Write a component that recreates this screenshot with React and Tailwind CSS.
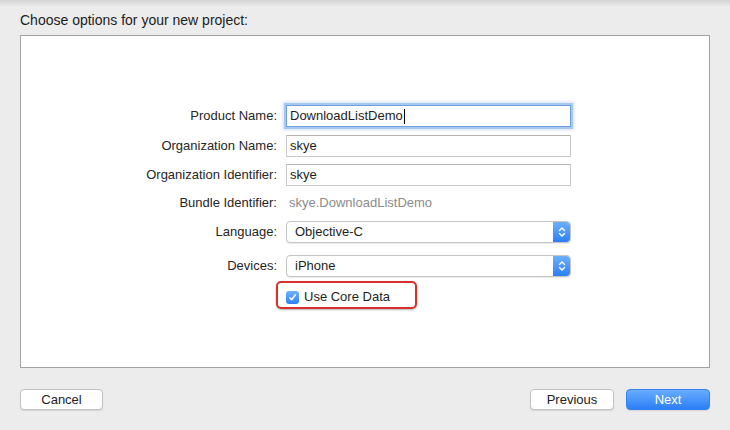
import React from 'react';

const font = { fontFamily: '"Liberation Sans", Arial, sans-serif' };

function Label({ children }) {
  return (
    <div className="w-[257px] shrink-0 pr-px text-right text-[13px] leading-4 text-[#262626]">
      {children}
    </div>
  );
}

function TextField({ value, focused }) {
  return (
    <div
      className={
        'ml-2 flex h-[22px] w-[285px] items-center bg-white pl-[3px] text-[13px] text-[#1e1e1e] ' +
        (focused
          ? 'border border-[#6d9ee0] shadow-[0_0_0_2px_#a9c8f0,0_0_3px_3px_rgba(120,165,230,0.35)]'
          : 'border border-[#c9c9c9] border-t-[#b4b4b4]')
      }
    >
      <span>{value}</span>
      {focused && <span className="ml-px h-[15px] w-px bg-black" />}
    </div>
  );
}

function Stepper() {
  return (
    <div className="flex h-full w-[17px] items-center justify-center rounded-r-[4px] bg-gradient-to-b from-[#6cb0fd] to-[#2b7ef6]">
      <svg width="8" height="12" viewBox="0 0 8 12" fill="none" stroke="white" strokeWidth="1.4" strokeLinecap="round" strokeLinejoin="round">
        <path d="M1.5 4.5 4 2l2.5 2.5" />
        <path d="M1.5 7.5 4 10l2.5-2.5" />
      </svg>
    </div>
  );
}

function Popup({ value }) {
  return (
    <div className="ml-2 flex h-[22px] w-[285px] items-center justify-between rounded-[4px] border border-[#c4c4c4] bg-white shadow-[0_1px_1px_rgba(0,0,0,0.08)]">
      <span className="pl-2 text-[13px] text-[#1e1e1e]">{value}</span>
      <Stepper />
    </div>
  );
}

export default function App() {
  return (
    <div
      className="flex h-[430px] w-[730px] flex-col bg-[linear-gradient(#d3d3d3,#ececec_7px)] px-5"
      style={font}
    >
      {/* Heading */}
      <div className="mt-[12px] h-4 text-[14px] leading-4 text-[#1c1c1c]">Choose options for your new project:</div>

      {/* Options panel */}
      <div className="mt-[7px] flex h-[333px] flex-col border border-[#a2a2a2] bg-white pt-[69px]">
        <div className="flex items-center">
          <Label>Product Name:</Label>
          <TextField value="DownloadListDemo" focused />
        </div>
        <div className="mt-2 flex items-center">
          <Label>Organization Name:</Label>
          <TextField value="skye" />
        </div>
        <div className="mt-[7px] flex items-center">
          <Label>Organization Identifier:</Label>
          <TextField value="skye" />
        </div>
        <div className="mt-[7px] flex h-5 items-center">
          <Label>Bundle Identifier:</Label>
          <div className="ml-2 pl-[3px] text-[13px] text-[#8b8b8b]">skye.DownloadListDemo</div>
        </div>
        <div className="mt-2 flex items-center">
          <Label>Language:</Label>
          <Popup value="Objective-C" />
        </div>
        <div className="mt-3 flex items-center">
          <Label>Devices:</Label>
          <Popup value="iPhone" />
        </div>
        <div className="mt-[9px] flex h-[22px] items-center">
          <div className="w-[257px] shrink-0" />
          <div className="relative ml-2 flex items-center">
            <div className="absolute left-[-10px] top-[-6px] h-[28px] w-[141px] rounded-[5px] border-2 border-[#d6312a] shadow-[0_1px_2px_rgba(0,0,0,0.3)]" />
            <div className="flex h-[13px] w-[13px] items-center justify-center rounded-[3px] bg-gradient-to-b from-[#6fb2fd] to-[#2d80f6]">
              <svg width="9" height="9" viewBox="0 0 9 9" fill="none" stroke="white" strokeWidth="1.5" strokeLinecap="round" strokeLinejoin="round">
                <path d="M1.8 4.8 3.7 6.8 7.4 1.8" />
              </svg>
            </div>
            <span className="ml-[5px] text-[13px] text-[#1e1e1e]">Use Core Data</span>
          </div>
        </div>
      </div>

      {/* Footer buttons */}
      <div className="mt-[21px] flex items-center">
        <button className="h-[21px] w-[83px] rounded-[4px] border border-[#c2c2c2] bg-white text-[13px] text-[#222] shadow-[0_1px_1px_rgba(0,0,0,0.1)]">
          Cancel
        </button>
        <div className="ml-auto flex gap-3">
          <button className="h-[21px] w-[84px] rounded-[4px] border border-[#c2c2c2] bg-white text-[13px] text-[#222] shadow-[0_1px_1px_rgba(0,0,0,0.1)]">
            Previous
          </button>
          <button className="h-[21px] w-[84px] rounded-[4px] border border-[#3583ee] bg-gradient-to-b from-[#68adfd] to-[#2a7ef6] text-[13px] text-white shadow-[0_1px_1px_rgba(0,0,0,0.1)]">
            Next
          </button>
        </div>
      </div>
    </div>
  );
}
